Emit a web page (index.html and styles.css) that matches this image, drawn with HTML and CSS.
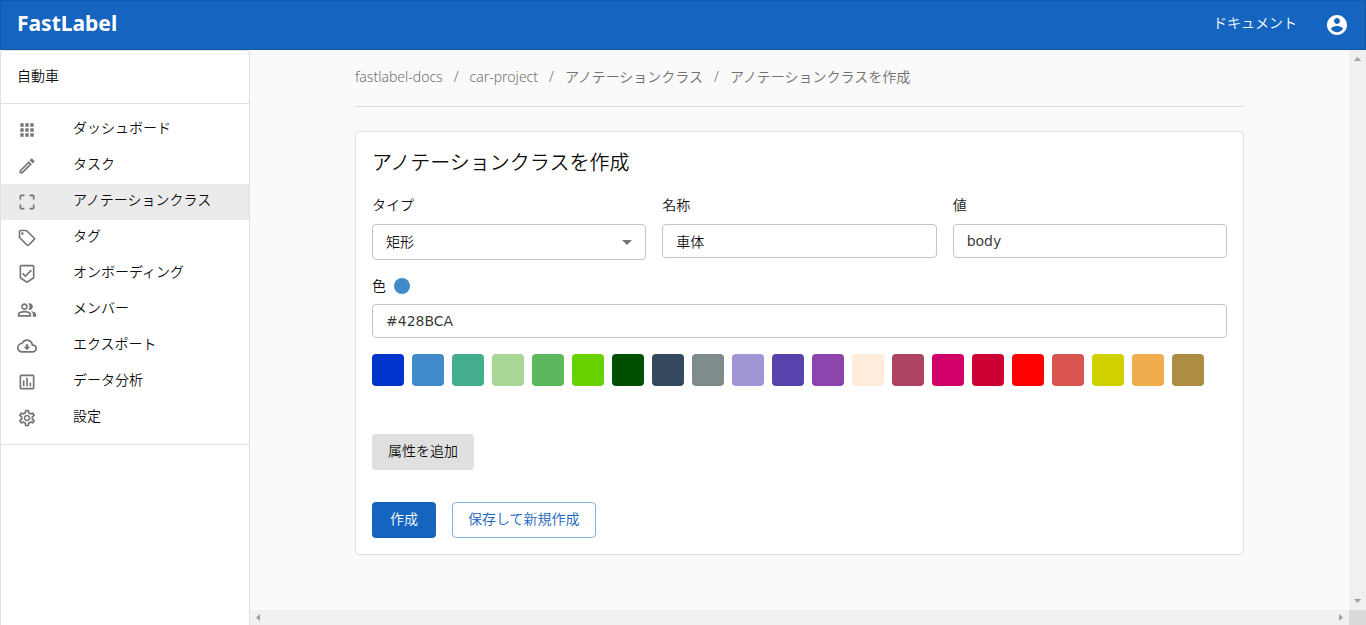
FILE: index.html
```html
<!DOCTYPE html>
<html lang="ja">
<head>
<meta charset="utf-8">
<meta name="viewport" content="width=device-width, initial-scale=1">
<title>FastLabel</title>
<link rel="stylesheet" href="styles.css">
</head>
<body>
<header class="appbar">
  <a class="brand" href="#">FastLabel</a>
  <nav class="appbar-nav">
    <a class="doc-link" href="#">ドキュメント</a>
    <button class="account" type="button" aria-label="アカウント">
      <svg viewBox="0 0 24 24"><path d="M12 2C6.48 2 2 6.48 2 12s4.48 10 10 10 10-4.48 10-10S17.52 2 12 2zm0 3c1.66 0 3 1.34 3 3s-1.34 3-3 3-3-1.34-3-3 1.34-3 3-3zm0 14.2c-2.5 0-4.71-1.28-6-3.22.03-1.99 4-3.08 6-3.08 1.99 0 5.97 1.09 6 3.08-1.29 1.94-3.5 3.22-6 3.22z"/></svg>
    </button>
  </nav>
</header>
<div class="layout">
  <aside class="sidebar">
    <div class="project">自動車</div>
    <nav class="menu">
      <a class="item" href="#"><svg viewBox="0 0 24 24"><path d="M4 8h4V4H4v4zm6 12h4v-4h-4v4zm-6 0h4v-4H4v4zm0-6h4v-4H4v4zm6 0h4v-4h-4v4zm6-10v4h4V4h-4zm-6 4h4V4h-4v4zm6 6h4v-4h-4v4zm0 6h4v-4h-4v4z"/></svg><span>ダッシュボード</span></a>
      <a class="item" href="#"><svg viewBox="0 0 24 24"><path d="M14.06 9.02l.92.92L5.92 19H5v-.92l9.06-9.06M17.66 3c-.25 0-.51.1-.7.29l-1.83 1.83 3.75 3.75 1.83-1.83c.39-.39.39-1.02 0-1.41l-2.34-2.34c-.2-.2-.45-.29-.71-.29zm-3.6 3.19L3 17.25V21h3.75L17.81 9.94l-3.75-3.75z"/></svg><span>タスク</span></a>
      <a class="item active" href="#" aria-current="page"><svg viewBox="0 0 24 24"><path d="M3 5v4h2V5h4V3H5c-1.1 0-2 .9-2 2zm2 10H3v4c0 1.1.9 2 2 2h4v-2H5v-4zm14 4h-4v2h4c1.1 0 2-.9 2-2v-4h-2v4zm0-16h-4v2h4v4h2V5c0-1.1-.9-2-2-2z"/></svg><span>アノテーションクラス</span></a>
      <a class="item" href="#"><svg viewBox="0 0 24 24"><path d="M21.41 11.58l-9-9C12.05 2.22 11.55 2 11 2H4c-1.1 0-2 .9-2 2v7c0 .55.22 1.05.59 1.42l9 9c.36.36.86.58 1.41.58s1.05-.22 1.41-.59l7-7c.37-.36.59-.86.59-1.41s-.23-1.06-.59-1.42zM13 20.01L4 11V4h7v-.01l9 9-7 7.02z"/><circle cx="6.5" cy="6.5" r="1.5"/></svg><span>タグ</span></a>
      <a class="item" href="#"><svg viewBox="0 0 24 24"><path d="M19 1H5c-1.1 0-1.99.9-1.99 2L3 15.93c0 .69.35 1.3.88 1.66L12 23l8.11-5.41c.53-.36.88-.97.88-1.66L21 3c0-1.1-.9-2-2-2zm-7 19.6l-7-4.66V3h14v12.93l-7 4.67zm-2.01-7.42l-2.58-2.59L6 12l4 4 8-8-1.42-1.42z"/></svg><span>オンボーディング</span></a>
      <a class="item" href="#"><svg viewBox="0 0 24 24"><path d="M16.67 13.13C18.04 14.06 19 15.32 19 17v3h4v-3c0-2.18-3.57-3.47-6.33-3.87zM15 12c2.21 0 4-1.79 4-4s-1.79-4-4-4c-.47 0-.91.1-1.33.24C14.5 5.27 15 6.58 15 8s-.5 2.73-1.33 3.76c.42.14.86.24 1.33.24zM9 12c2.21 0 4-1.79 4-4s-1.79-4-4-4-4 1.79-4 4 1.79 4 4 4zm0-6c1.1 0 2 .9 2 2s-.9 2-2 2-2-.9-2-2 .9-2 2-2zM9 13c-2.67 0-8 1.34-8 4v3h16v-3c0-2.66-5.33-4-8-4zm6 5H3v-.99C3.2 16.29 6.3 15 9 15s5.8 1.29 6 2v1z"/></svg><span>メンバー</span></a>
      <a class="item" href="#"><svg viewBox="0 0 24 24"><path d="M19.35 10.04C18.67 6.59 15.64 4 12 4 9.11 4 6.6 5.64 5.35 8.04 2.34 8.36 0 10.91 0 14c0 3.31 2.69 6 6 6h13c2.76 0 5-2.24 5-5 0-2.64-2.05-4.78-4.65-4.96zM19 18H6c-2.21 0-4-1.79-4-4 0-2.05 1.53-3.76 3.56-3.97l1.07-.11.5-.95C8.08 7.14 9.94 6 12 6c2.62 0 4.88 1.86 5.39 4.43l.3 1.5 1.53.11c1.56.1 2.78 1.41 2.78 2.96 0 1.65-1.35 3-3 3zm-5.55-8h-2.9v3H8l4 4 4-4h-2.55z"/></svg><span>エクスポート</span></a>
      <a class="item" href="#"><svg viewBox="0 0 24 24"><path d="M19 3H5c-1.1 0-2 .9-2 2v14c0 1.1.9 2 2 2h14c1.1 0 2-.9 2-2V5c0-1.1-.9-2-2-2zm0 16H5V5h14v14zM7 10h2v7H7zm4-3h2v10h-2zm4 6h2v4h-2z"/></svg><span>データ分析</span></a>
      <a class="item" href="#"><svg viewBox="0 0 24 24"><path d="M19.43 12.98c.04-.32.07-.64.07-.98 0-.34-.03-.66-.07-.98l2.11-1.65c.19-.15.24-.42.12-.64l-2-3.46c-.09-.16-.26-.25-.44-.25-.06 0-.12.01-.17.03l-2.49 1c-.52-.4-1.08-.73-1.69-.98l-.38-2.65C14.46 2.18 14.25 2 14 2h-4c-.25 0-.46.18-.49.42l-.38 2.65c-.61.25-1.17.59-1.69.98l-2.49-1c-.06-.02-.12-.03-.18-.03-.17 0-.34.09-.43.25l-2 3.46c-.13.22-.07.49.12.64l2.11 1.65c-.04.32-.07.65-.07.98 0 .33.03.66.07.98l-2.11 1.65c-.19.15-.24.42-.12.64l2 3.46c.09.16.26.25.44.25.06 0 .12-.01.17-.03l2.49-1c.52.4 1.08.73 1.69.98l.38 2.65c.03.24.24.42.49.42h4c.25 0 .46-.18.49-.42l.38-2.65c.61-.25 1.17-.59 1.69-.98l2.49 1c.06.02.12.03.18.03.17 0 .34-.09.43-.25l2-3.46c.12-.22.07-.49-.12-.64l-2.11-1.65zm-1.98-1.71c.04.31.05.52.05.73 0 .21-.02.43-.05.73l-.14 1.13.89.7 1.08.84-.7 1.21-1.27-.51-1.04-.42-.9.68c-.43.32-.84.56-1.25.73l-1.06.43-.16 1.13-.2 1.35h-1.4l-.19-1.35-.16-1.13-1.06-.43c-.43-.18-.83-.41-1.23-.71l-.91-.7-1.06.43-1.27.51-.7-1.21 1.08-.84.89-.7-.14-1.13c-.03-.31-.05-.54-.05-.74s.02-.43.05-.73l.14-1.13-.89-.7-1.08-.84.7-1.21 1.27.51 1.04.42.9-.68c.43-.32.84-.56 1.25-.73l1.06-.43.16-1.13.2-1.35h1.39l.19 1.35.16 1.13 1.06.43c.43.18.83.41 1.23.71l.91.7 1.06-.43 1.27-.51.7 1.21-1.07.85-.89.7.14 1.13zM12 8c-2.21 0-4 1.79-4 4s1.79 4 4 4 4-1.79 4-4-1.79-4-4-4zm0 6c-1.1 0-2-.9-2-2s.9-2 2-2 2 .9 2 2-.9 2-2 2z"/></svg><span>設定</span></a>
    </nav>
  </aside>
  <div class="viewport">
    <main class="main">
      <div class="container">
        <nav class="crumbs" aria-label="breadcrumb">
          <a href="#">fastlabel-docs</a><span>/</span><a href="#">car-project</a><span>/</span><a href="#">アノテーションクラス</a><span>/</span><a href="#">アノテーションクラスを作成</a>
        </nav>
        <form class="card">
          <h1 class="title">アノテーションクラスを作成</h1>
          <div class="fields">
            <div class="field">
              <label for="type">タイプ</label>
              <div class="select-wrap">
                <select id="type" class="control select"><option>矩形</option></select>
                <svg class="caret" viewBox="0 0 24 24"><path d="M7 10l5 5 5-5z"/></svg>
              </div>
            </div>
            <div class="field">
              <label for="name">名称</label>
              <input id="name" class="control" type="text" value="車体">
            </div>
            <div class="field">
              <label for="value">値</label>
              <input id="value" class="control latin" type="text" value="body">
            </div>
          </div>
          <div class="color-label"><label for="color">色</label><span class="dot"></span></div>
          <input id="color" class="control latin" type="text" value="#428BCA">
          <div class="swatches">
            <button type="button" class="swatch" aria-label="#0033CC" style="background:#0033cc"></button>
            <button type="button" class="swatch" aria-label="#428BCA" style="background:#428bca"></button>
            <button type="button" class="swatch" aria-label="#44AD8E" style="background:#44ad8e"></button>
            <button type="button" class="swatch" aria-label="#A8D695" style="background:#a8d695"></button>
            <button type="button" class="swatch" aria-label="#5CB85C" style="background:#5cb85c"></button>
            <button type="button" class="swatch" aria-label="#69D100" style="background:#69d100"></button>
            <button type="button" class="swatch" aria-label="#004E00" style="background:#004e00"></button>
            <button type="button" class="swatch" aria-label="#34495E" style="background:#34495e"></button>
            <button type="button" class="swatch" aria-label="#7F8C8D" style="background:#7f8c8d"></button>
            <button type="button" class="swatch" aria-label="#A295D6" style="background:#a295d6"></button>
            <button type="button" class="swatch" aria-label="#5843AD" style="background:#5843ad"></button>
            <button type="button" class="swatch" aria-label="#8E44AD" style="background:#8e44ad"></button>
            <button type="button" class="swatch" aria-label="#FFECDB" style="background:#ffecdb"></button>
            <button type="button" class="swatch" aria-label="#AD4363" style="background:#ad4363"></button>
            <button type="button" class="swatch" aria-label="#D10069" style="background:#d10069"></button>
            <button type="button" class="swatch" aria-label="#CC0033" style="background:#cc0033"></button>
            <button type="button" class="swatch" aria-label="#FF0000" style="background:#ff0000"></button>
            <button type="button" class="swatch" aria-label="#D9534F" style="background:#d9534f"></button>
            <button type="button" class="swatch" aria-label="#D1D100" style="background:#d1d100"></button>
            <button type="button" class="swatch" aria-label="#F0AD4E" style="background:#f0ad4e"></button>
            <button type="button" class="swatch" aria-label="#AD8D43" style="background:#ad8d43"></button>
          </div>
          <div class="attributes"><button type="button" class="btn btn-grey">属性を追加</button></div>
          <div class="actions">
            <button type="submit" class="btn btn-primary">作成</button>
            <button type="button" class="btn btn-outline">保存して新規作成</button>
          </div>
        </form>
      </div>
    </main>
    <div class="bar bar-v" aria-hidden="true">
      <svg viewBox="0 0 7 4" class="arrow-v"><path d="M0 4L3.5 0 7 4z"/></svg>
      <svg viewBox="0 0 7 4" class="arrow-v"><path d="M0 0h7L3.5 4z"/></svg>
    </div>
    <div class="bar bar-h" aria-hidden="true">
      <svg viewBox="0 0 4 7" class="arrow-h"><path d="M4 0v7L0 3.5z"/></svg>
      <svg viewBox="0 0 4 7" class="arrow-h"><path d="M0 0l4 3.5L0 7z"/></svg>
    </div>
    <div class="corner"></div>
  </div>
</div>
</body>
</html>
```
FILE: styles.css
```css
* {
  box-sizing: border-box;
}

body {
  margin: 0;
  height: 100vh;
  display: flex;
  flex-direction: column;
  background: #fafafa;
  color: rgba(0, 0, 0, 0.95);
  font-family: "Noto Sans", "Noto Sans CJK JP", sans-serif;
  font-size: 14px;
  line-height: 20px;
  font-weight: 350;
}

a {
  color: inherit;
  text-decoration: none;
}

button,
input,
select {
  font: inherit;
  color: inherit;
  margin: 0;
}

svg {
  display: block;
  fill: currentColor;
}

.appbar {
  flex: none;
  height: 50px;
  padding: 0 16px;
  border: 1px solid #1259a8;
  background: #1565c0;
  color: #fff;
  display: flex;
  align-items: center;
  justify-content: space-between;
}

.brand {
  font-size: 21px;
  font-weight: 700;
  line-height: 28px;
  padding-bottom: 4px;
}

.appbar-nav {
  display: flex;
  align-items: center;
  gap: 28px;
}

.doc-link {
  padding-bottom: 4px;
}

.account {
  padding: 0;
  border: 0;
  background: none;
  color: #fff;
}

.account svg {
  width: 24px;
  height: 24px;
}

.layout {
  flex: 1;
  min-height: 0;
  display: flex;
}

.sidebar {
  flex: none;
  width: 250px;
  border: 1px solid #e0e0e0;
  border-bottom: 0;
  border-radius: 4px 4px 0 0;
  background: #fff;
}

.project {
  padding: 15px 16px 17px;
  border-bottom: 1px solid #e0e0e0;
}

.menu {
  padding: 8px 0;
  border-bottom: 1px solid #e0e0e0;
}

.item {
  display: flex;
  align-items: center;
  gap: 36px;
  height: 36px;
  padding: 0 16px;
}

.item svg {
  width: 20px;
  height: 20px;
  color: #757575;
}

.item span {
  padding-bottom: 4px;
}

.active {
  background: #ebebeb;
}

.viewport {
  flex: 1;
  min-width: 0;
  display: grid;
  grid-template-columns: minmax(0, 1fr) 17px;
  grid-template-rows: minmax(0, 1fr) 15px;
}

.main {
  overflow: hidden;
  padding: 17px 24px;
}

.container {
  max-width: 889px;
  margin: 0 auto;
}

.crumbs {
  display: flex;
  gap: 11px;
  padding-bottom: 19px;
  margin-bottom: 24px;
  border-bottom: 1px solid #dcdcdc;
  color: #707070;
}

.card {
  padding: 16px;
  border: 1px solid #e0e0e0;
  border-radius: 4px;
  background: #fff;
}

.title {
  margin: 0 0 16px;
  font-size: 20px;
  line-height: 30px;
  font-weight: 350;
}

.fields {
  display: grid;
  grid-template-columns: repeat(3, minmax(0, 1fr));
  gap: 16px;
  align-items: start;
  margin-bottom: 16px;
}

.field > label {
  display: block;
  line-height: 22px;
  margin-bottom: 8px;
}

.color-label {
  display: flex;
  align-items: center;
  gap: 8px;
  margin-bottom: 8px;
}

.dot {
  width: 16px;
  height: 16px;
  border-radius: 50%;
  background: #428bca;
}

.control {
  display: block;
  width: 100%;
  height: 34px;
  padding: 0 13px;
  border: 1px solid #c4c4c4;
  border-radius: 4px;
  background: #fff;
}

.latin {
  font-family: "DejaVu Sans", "Noto Sans CJK JP", sans-serif;
  font-weight: 400;
  color: rgba(0, 0, 0, 0.8);
}

.select-wrap {
  position: relative;
}

.select {
  height: 36px;
  appearance: none;
}

.caret {
  position: absolute;
  top: 6px;
  right: 7px;
  width: 24px;
  height: 24px;
  color: #757575;
  pointer-events: none;
}

.swatches {
  display: flex;
  flex-wrap: wrap;
  gap: 8px;
  margin: 16px 0 48px;
}

.swatch {
  width: 32px;
  height: 32px;
  padding: 0;
  border: 0;
  border-radius: 4px;
}

.attributes {
  margin-bottom: 32px;
}

.actions {
  display: flex;
  gap: 16px;
}

.btn {
  display: block;
  height: 36px;
  min-width: 64px;
  padding: 0 15px 2px;
  border: 1px solid transparent;
  border-radius: 4px;
}

.btn-grey {
  background: #e0e0e0;
}

.btn-primary {
  background: #1565c0;
  color: #fff;
}

.btn-outline {
  border-color: #8ab2df;
  background: #fff;
  color: #1565c0;
}

.bar {
  display: flex;
  justify-content: space-between;
  align-items: center;
  background: #f0f0f0;
  color: #a0a0a0;
}

.bar-v {
  flex-direction: column;
  padding: 7px 0;
}

.bar-h {
  padding: 0 6px;
}

.arrow-v {
  width: 7px;
  height: 4px;
}

.arrow-h {
  width: 4px;
  height: 7px;
}

.corner {
  background: #dadada;
}
```
